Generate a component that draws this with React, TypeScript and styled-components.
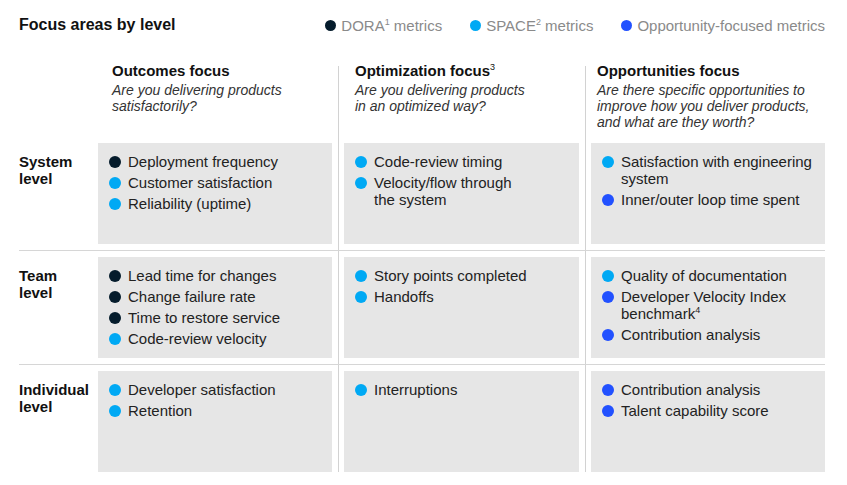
import React from 'react'
import styled, { createGlobalStyle } from 'styled-components'

type Kind = 'dora' | 'space' | 'opportunity'

const dotColors: Record<Kind, string> = {
	dora: '#051c2c',
	space: '#00a9f4',
	opportunity: '#2251ff',
}

const GlobalStyle = createGlobalStyle`
	body {
		margin: 0;
		background: #ffffff;
		font-family: 'Liberation Sans', Arial, sans-serif;
	}
`

const Page = styled.div`
	width: 847px;
	padding-top: 15px;
`

const TopBar = styled.div`
	display: flex;
	justify-content: space-between;
	align-items: center;
	height: 20px;
	padding: 0 22px 0 19px;
`

const Title = styled.h1`
	margin: 0;
	font-size: 16px;
	font-weight: 700;
	color: #111111;
`

const Legend = styled.div`
	display: flex;
	gap: 28px;
`

const LegendItem = styled.div`
	display: flex;
	align-items: center;
	gap: 5px;
	font-size: 15px;
	color: #8a8a8a;
`

const Dot = styled.span<{ $kind: Kind }>`
	flex-shrink: 0;
	width: 11px;
	height: 11px;
	border-radius: 50%;
	background: ${(p) => dotColors[p.$kind]};
`

const Sup = styled.sup`
	font-size: 60%;
	font-weight: 400;
	line-height: 0;
	vertical-align: super;
`

const Board = styled.div`
	display: grid;
	grid-template-columns: 79px 234px 12px 235px 12px 234px;
	grid-template-rows: 81px 101px 13px 101px 13px 101px;
	margin: 27px 0 0 19px;
	width: 807px;
`

const Divider = styled.div<{ $col: number }>`
	grid-column: ${(p) => p.$col};
	grid-row: 1 / -1;
	width: 1px;
	margin: 4px 0 0 6px;
	background: #d2d2d2;
`

const Rule = styled.div<{ $row: number }>`
	grid-column: 1 / -1;
	grid-row: ${(p) => p.$row};
	align-self: center;
	height: 1px;
	background: #d6d6d6;
`

const ColumnHead = styled.div<{ $inset: number }>`
	padding-left: ${(p) => p.$inset}px;
`

const HeadTitle = styled.div`
	font-size: 15px;
	line-height: 18px;
	font-weight: 700;
	color: #111111;
`

const Question = styled.div`
	margin-top: 2px;
	font-size: 14px;
	line-height: 16px;
	font-style: italic;
	color: #333333;
	white-space: pre-line;
`

const LevelLabel = styled.div`
	padding-top: 10px;
	font-size: 15px;
	line-height: 17px;
	font-weight: 700;
	color: #111111;
	white-space: pre-line;
`

const Cell = styled.ul`
	display: flex;
	flex-direction: column;
	gap: 4px;
	margin: 0;
	padding: 10px 8px 0 11px;
	list-style: none;
	background: #e6e6e6;
`

const Item = styled.li`
	display: flex;
	gap: 7px;
	font-size: 15px;
	line-height: 17px;
	color: #222222;
	white-space: pre-line;

	${Dot} {
		width: 12px;
		height: 12px;
		margin-top: 2.5px;
	}
`

interface Metric {
	kind: Kind
	text: React.ReactNode
}

const columns = [
	{ title: 'Outcomes focus', question: 'Are you delivering products\nsatisfactorily?', inset: 14 },
	{
		title: (
			<>
				Optimization focus<Sup>3</Sup>
			</>
		),
		question: 'Are you delivering products\nin an optimized way?',
		inset: 11,
	},
	{
		title: 'Opportunities focus',
		question: 'Are there specific opportunities to\nimprove how you deliver products,\nand what are they worth?',
		inset: 6,
	},
]

const levels: { label: string; cells: Metric[][] }[] = [
	{
		label: 'System\nlevel',
		cells: [
			[
				{ kind: 'dora', text: 'Deployment frequency' },
				{ kind: 'space', text: 'Customer satisfaction' },
				{ kind: 'space', text: 'Reliability (uptime)' },
			],
			[
				{ kind: 'space', text: 'Code-review timing' },
				{ kind: 'space', text: 'Velocity/flow through\nthe system' },
			],
			[
				{ kind: 'space', text: 'Satisfaction with engineering\nsystem' },
				{ kind: 'opportunity', text: 'Inner/outer loop time spent' },
			],
		],
	},
	{
		label: 'Team\nlevel',
		cells: [
			[
				{ kind: 'dora', text: 'Lead time for changes' },
				{ kind: 'dora', text: 'Change failure rate' },
				{ kind: 'dora', text: 'Time to restore service' },
				{ kind: 'space', text: 'Code-review velocity' },
			],
			[
				{ kind: 'space', text: 'Story points completed' },
				{ kind: 'space', text: 'Handoffs' },
			],
			[
				{ kind: 'space', text: 'Quality of documentation' },
				{
					kind: 'opportunity',
					text: (
						<>
							Developer Velocity Index{'\n'}benchmark<Sup>4</Sup>
						</>
					),
				},
				{ kind: 'opportunity', text: 'Contribution analysis' },
			],
		],
	},
	{
		label: 'Individual\nlevel',
		cells: [
			[
				{ kind: 'space', text: 'Developer satisfaction' },
				{ kind: 'space', text: 'Retention' },
			],
			[{ kind: 'space', text: 'Interruptions' }],
			[
				{ kind: 'opportunity', text: 'Contribution analysis' },
				{ kind: 'opportunity', text: 'Talent capability score' },
			],
		],
	},
]

export default function App() {
	return (
		<Page>
			<GlobalStyle />
			<TopBar>
				<Title>Focus areas by level</Title>
				<Legend>
					<LegendItem>
						<Dot $kind="dora" />
						<span>
							DORA<Sup>1</Sup> metrics
						</span>
					</LegendItem>
					<LegendItem>
						<Dot $kind="space" />
						<span>
							SPACE<Sup>2</Sup> metrics
						</span>
					</LegendItem>
					<LegendItem>
						<Dot $kind="opportunity" />
						<span>Opportunity-focused metrics</span>
					</LegendItem>
				</Legend>
			</TopBar>

			<Board>
				<Divider $col={3} />
				<Divider $col={5} />
				<Rule $row={3} />
				<Rule $row={5} />

				<div />
				{columns.map((col, i) => (
					<ColumnHead key={i} $inset={col.inset}>
						<HeadTitle>{col.title}</HeadTitle>
						<Question>{col.question}</Question>
					</ColumnHead>
				))}

				{levels.map((level) => (
					<React.Fragment key={level.label}>
						<LevelLabel>{level.label}</LevelLabel>
						{level.cells.map((metrics, i) => (
							<Cell key={i}>
								{metrics.map((m, j) => (
									<Item key={j}>
										<Dot $kind={m.kind} />
										<span>{m.text}</span>
									</Item>
								))}
							</Cell>
						))}
					</React.Fragment>
				))}
			</Board>
		</Page>
	)
}
